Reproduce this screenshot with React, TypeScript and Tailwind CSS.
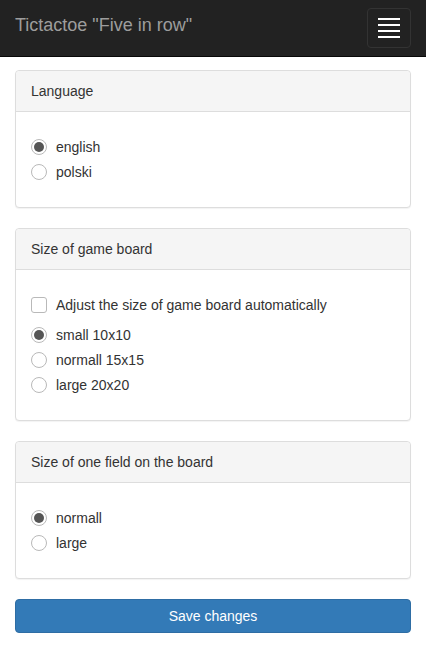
import React, { useState } from 'react';

type Option = { value: string; label: string };

function Radio({ checked, label, onClick }: { checked: boolean; label: string; onClick: () => void }) {
  return (
    <label className="flex items-center h-5 cursor-pointer" onClick={onClick}>
      <span className="w-4 h-4 rounded-full border border-[#b9b9b9] bg-white flex items-center justify-center shrink-0">
        {checked && <span className="w-[10px] h-[10px] rounded-full bg-[#555]" />}
      </span>
      <span className="ml-[9px]">{label}</span>
    </label>
  );
}

function RadioGroup({ options, value, onChange }: { options: Option[]; value: string; onChange: (v: string) => void }) {
  return (
    <div className="flex flex-col gap-[5px] my-[10px]">
      {options.map((o) => (
        <Radio key={o.value} checked={value === o.value} label={o.label} onClick={() => onChange(o.value)} />
      ))}
    </div>
  );
}

function Panel({ title, children }: { title: string; children: React.ReactNode }) {
  return (
    <div className="border border-[#ddd] rounded bg-white shadow-[0_1px_1px_rgba(0,0,0,0.05)] mb-5">
      <div className="bg-[#f5f5f5] border-b border-[#ddd] rounded-t px-[15px] py-[10px] leading-5">{title}</div>
      <div className="p-[15px]">{children}</div>
    </div>
  );
}

export default function App() {
  const [lang, setLang] = useState('en');
  const [auto, setAuto] = useState(false);
  const [board, setBoard] = useState('small');
  const [field, setField] = useState('normal');

  return (
    <div className="min-h-[661px] bg-white text-[14px] text-[#333] font-['Liberation_Sans',Arial,sans-serif]">
      <nav className="h-[57px] bg-[#222] border-b border-[#080808] flex items-center justify-between px-[15px]">
        <span className="text-[18px] text-[#9d9d9d] leading-5 -mt-[6px]">Tictactoe "Five in row"</span>
        <button className="w-[44px] h-[40px] border border-[#333] rounded flex flex-col items-center justify-center gap-1 -mt-[1px]">
          <span className="block w-[22px] h-[2px] bg-white" />
          <span className="block w-[22px] h-[2px] bg-white" />
          <span className="block w-[22px] h-[2px] bg-white" />
          <span className="block w-[22px] h-[2px] bg-white" />
        </button>
      </nav>

      <div className="px-[15px] pt-[13px]">
        <Panel title="Language">
          <RadioGroup
            options={[
              { value: 'en', label: 'english' },
              { value: 'pl', label: 'polski' },
            ]}
            value={lang}
            onChange={setLang}
          />
        </Panel>

        <Panel title="Size of game board">
          <label className="flex items-center h-5 my-[10px] cursor-pointer" onClick={() => setAuto(!auto)}>
            <span className="w-4 h-4 rounded-[3px] border border-[#b9b9b9] bg-white flex items-center justify-center shrink-0 text-[12px] leading-none">
              {auto && '✓'}
            </span>
            <span className="ml-[9px]">Adjust the size of game board automatically</span>
          </label>
          <RadioGroup
            options={[
              { value: 'small', label: 'small 10x10' },
              { value: 'normal', label: 'normall 15x15' },
              { value: 'large', label: 'large 20x20' },
            ]}
            value={board}
            onChange={setBoard}
          />
        </Panel>

        <Panel title="Size of one field on the board">
          <RadioGroup
            options={[
              { value: 'normal', label: 'normall' },
              { value: 'large', label: 'large' },
            ]}
            value={field}
            onChange={setField}
          />
        </Panel>

        <button className="w-full h-[34px] bg-[#337ab7] border border-[#2e6da4] rounded text-white leading-5">
          Save changes
        </button>
      </div>
    </div>
  );
}
